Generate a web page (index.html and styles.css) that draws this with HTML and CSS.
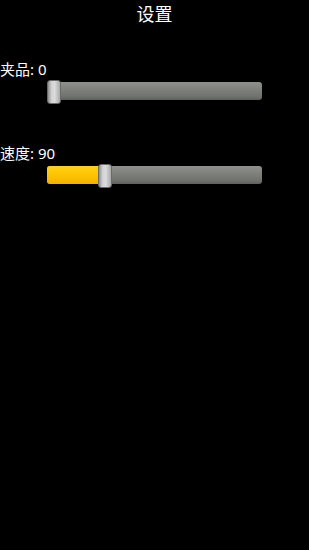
FILE: index.html
```
<html>
<head>
<meta charset="UTF-8">
<title>设置</title>
<link rel="stylesheet" href="styles.css">
</head>
<body>
<div class="title">设置</div>

<div class="setting first">
  <div class="label">夹品: 0</div>
  <div class="slider">
    <div class="fill" style="width: 0px"></div>
    <div class="thumb" style="left: 0px"></div>
  </div>
</div>

<div class="setting">
  <div class="label">速度: 90</div>
  <div class="slider">
    <div class="fill" style="width: 56px"></div>
    <div class="thumb" style="left: 51px"></div>
  </div>
</div>
</body>
</html>
```

FILE: styles.css
```
body { margin: 0; background: #000; color: #fff;
       font-family: "Noto Sans", "Noto Sans CJK SC", sans-serif; }

.title   { text-align: center; font-size: 18px; line-height: 29px; }

.setting       { margin-top: 43px; }
.setting.first { margin-top: 30px; }

.label   { font-size: 15px; line-height: 20px; margin-bottom: 3px; }

.slider  { position: relative; margin-left: 47px; width: 215px; height: 18px;
           border-radius: 3px;
           background: linear-gradient(#8e918c, #7c7f7a 45%, #6f726d 80%, #5d605b); }
.fill    { height: 100%; border-radius: 3px;
           background: linear-gradient(#ffd21a, #ffc400 50%, #f2b000); }
.thumb   { position: absolute; top: -2px; width: 12px; height: 22px;
           border: 1px solid #6a6a6a; border-radius: 3px;
           background: linear-gradient(to right, #8f8f8f, #d2d2d2 30%, #dcdcdc 55%, #a8a8a8); }
```
